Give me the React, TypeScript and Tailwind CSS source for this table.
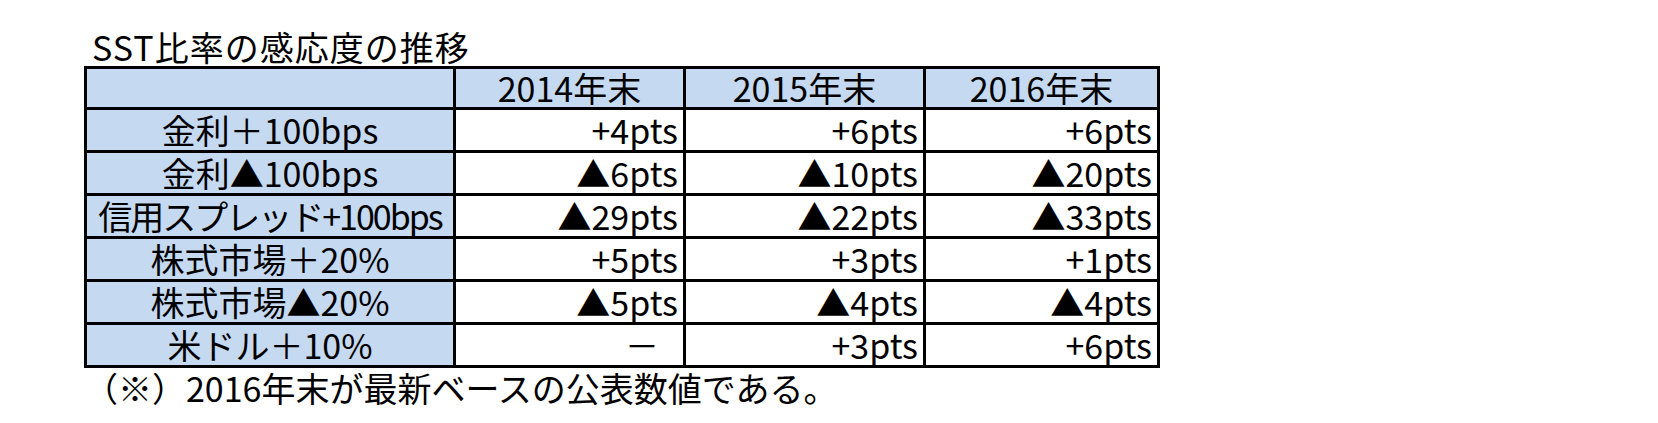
const header = ['2014年末', '2015年末', '2016年末'];

const rows: { label: string; values: string[] }[] = [
  { label: '金利＋100bps', values: ['+4pts', '+6pts', '+6pts'] },
  { label: '金利▲100bps', values: ['▲6pts', '▲10pts', '▲20pts'] },
  { label: '信用スプレッド+100bps', values: ['▲29pts', '▲22pts', '▲33pts'] },
  { label: '株式市場＋20%', values: ['+5pts', '+3pts', '+1pts'] },
  { label: '株式市場▲20%', values: ['▲5pts', '▲4pts', '▲4pts'] },
  { label: '米ドル＋10%', values: ['－', '+3pts', '+6pts'] },
];

export default function App() {
  return (
    <div
      className="w-[1658px] h-[423px] bg-white text-black overflow-hidden pl-[84px] pt-[28px]"
      style={{ fontFamily: '"Noto Sans CJK JP", "Noto Sans", sans-serif' }}
    >
      <div className="ml-[8px] text-[34px] leading-[38px] tracking-[1px]">SST比率の感応度の推移</div>

      {/* table: black background shows through the gaps as cell borders */}
      <div className="w-[1076px] bg-black p-[3px] grid grid-cols-[366px_227px_237px_231px] gap-[3px] text-[34px] leading-none">
        <div className="h-[38px] bg-[#c5d9f1]" />
        {header.map((h) => (
          <div key={h} className="h-[38px] bg-[#c5d9f1] flex items-center justify-center">
            {h}
          </div>
        ))}

        {rows.map((r) => (
          <>
            <div
              key={r.label}
              className={`h-[40px] bg-[#c5d9f1] flex items-center justify-center whitespace-nowrap ${r.label.length > 12 ? 'tracking-[-2px]' : ''}`}
            >
              {r.label}
            </div>
            {r.values.map((v, i) => (
              <div
                key={r.label + i}
                className={`h-[40px] bg-white flex items-center justify-end whitespace-nowrap ${v === '－' ? 'pr-[24px]' : 'pr-[5px]'}`}
              >
                {v}
              </div>
            ))}
          </>
        ))}
      </div>

      <div className="text-[34px] leading-[40px] whitespace-nowrap">（※）2016年末が最新ベースの公表数値である。</div>
    </div>
  );
}
